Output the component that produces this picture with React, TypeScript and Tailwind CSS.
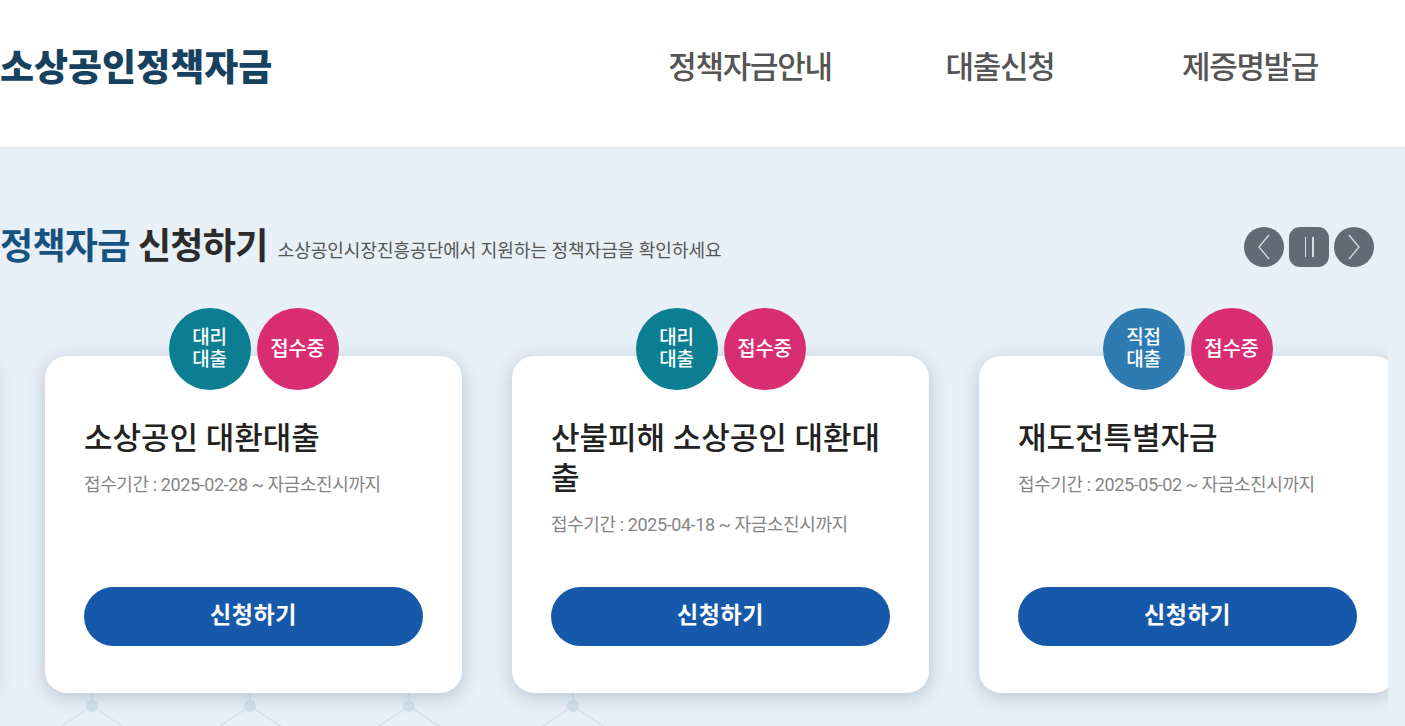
import React from "react";

const KR = "font-['Roboto','Noto_Sans_CJK_KR',sans-serif]";

type Card = {
  badge: string[];
  badgeColor: string;
  title: string;
  period: string;
};

const cards: Card[] = [
  { badge: ["대리", "대출"], badgeColor: "bg-[#0b7e91]", title: "소상공인 대환대출", period: "접수기간 : 2025-02-28 ~ 자금소진시까지" },
  { badge: ["대리", "대출"], badgeColor: "bg-[#0b7e91]", title: "산불피해 소상공인 대환대출", period: "접수기간 : 2025-04-18 ~ 자금소진시까지" },
  { badge: ["직접", "대출"], badgeColor: "bg-[#2d7bb0]", title: "재도전특별자금", period: "접수기간 : 2025-05-02 ~ 자금소진시까지" },
];

const cardBase =
  "relative flex h-[337px] w-[417px] shrink-0 flex-col rounded-[22px] bg-white shadow-[0_4px_18px_rgba(70,95,120,0.28)]";

function LoanCard({ c }: { c: Card }) {
  return (
    <div className={`${cardBase} px-[39px] pt-[63px] pb-[47px]`}>
      <div className="absolute top-[-48px] left-0 right-0 flex justify-center gap-[6px]">
        <div className={`flex h-[82px] w-[82px] flex-col items-center justify-center rounded-full ${c.badgeColor} text-[19px] leading-[22px] font-medium text-white tracking-[-0.3px]`}>
          <span>{c.badge[0]}</span>
          <span>{c.badge[1]}</span>
        </div>
        <div className="flex h-[82px] w-[82px] items-center justify-center rounded-full bg-[#d92d72] text-[20px] font-medium text-white tracking-[-0.3px]">
          접수중
        </div>
      </div>
      <div className="text-[31px] leading-[40px] font-medium text-[#222] tracking-[0px] break-all">{c.title}</div>
      <div className="mt-[14px] text-[18px] leading-[24px] text-[#858585] tracking-[-0.4px]">{c.period}</div>
      <button className="mt-auto flex h-[59px] w-full items-center justify-center rounded-full bg-[#1659ab] text-[23px] font-bold text-white tracking-[0.6px]">
        신청하기
      </button>
    </div>
  );
}

function Pattern() {
  const nodes = [-66, 92, 250, 409, 573];
  return (
    <svg className="absolute left-0 bottom-0" width="700" height="80" viewBox="0 0 700 80">
      {nodes.map((x, i) => (
        <g key={i} stroke="#d5e2ec" strokeWidth="1.5" fill="none">
          <line x1={x} y1="0" x2={x} y2="60" />
          <line x1={x} y1="60" x2={x - 60} y2="100" />
          <line x1={x} y1="60" x2={x + 60} y2="100" />
          <circle cx={x} cy="60" r="6" fill="#d3e1ea" stroke="none" />
        </g>
      ))}
    </svg>
  );
}

export default function App() {
  return (
    <div className={`h-[726px] w-[1405px] overflow-hidden bg-[#e7eff7] ${KR}`}>
      <header className="flex h-[148px] items-center border-b border-[#dfe5ea] bg-white pr-[30px] pb-[10px]">
        <div className="text-[37px] font-black text-[#16415f] tracking-[0px] leading-none">소상공인정책자금</div>
        <nav className="ml-auto flex">
          {["정책자금안내", "대출신청", "제증명발급"].map((t) => (
            <div key={t} className="w-[250px] text-center text-[31px] font-medium text-[#555] tracking-[-1.3px]">
              {t}
            </div>
          ))}
        </nav>
      </header>
      <section className="relative h-[578px] pt-[79px]">
        <Pattern />
        <div className="relative flex h-[40px] items-center pr-[31px]">
          <h2 className="text-[36px] font-bold tracking-[-0.7px] leading-none">
            <span className="text-[#16527f]">정책자금</span> <span className="text-[#2b2b2b]">신청하기</span>
          </h2>
          <p className="ml-[10px] mt-[6px] text-[18px] text-[#555] tracking-[0px]">
            소상공인시장진흥공단에서 지원하는 정책자금을 확인하세요
          </p>
          <div className="ml-auto flex gap-[5px]">
            <button className="flex h-[40px] w-[40px] items-center justify-center rounded-full bg-[#626b75]">
              <svg width="16" height="28" viewBox="0 0 16 28" fill="none" stroke="#d9dde1" strokeWidth="1.3">
                <path d="M13 2 L3 14 L13 26" />
              </svg>
            </button>
            <button className="flex h-[40px] w-[40px] items-center justify-center gap-[6px] rounded-[11px] bg-[#626b75]">
              <span className="h-[20px] w-[1.5px] bg-[#d9dde1]" />
              <span className="h-[20px] w-[1.5px] bg-[#d9dde1]" />
            </button>
            <button className="flex h-[40px] w-[40px] items-center justify-center rounded-full bg-[#626b75]">
              <svg width="16" height="28" viewBox="0 0 16 28" fill="none" stroke="#d9dde1" strokeWidth="1.3">
                <path d="M3 2 L13 14 L3 26" />
              </svg>
            </button>
          </div>
        </div>
        <div className="relative mt-[41px] w-[1388px] overflow-hidden pt-[48px] pb-[40px]">
          <div className="ml-[-422px] flex gap-[50px]">
            <div className={cardBase} />
            {cards.map((c, i) => (
              <LoanCard key={i} c={c} />
            ))}
          </div>
        </div>
      </section>
    </div>
  );
}
